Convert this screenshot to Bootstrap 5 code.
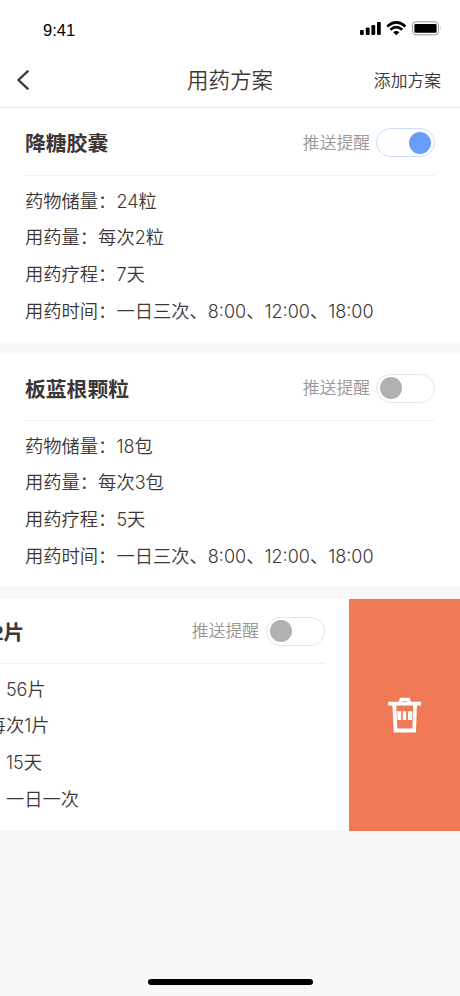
<!DOCTYPE html>
<html lang="zh-CN">
<head>
<meta charset="utf-8">
<meta name="viewport" content="width=device-width, initial-scale=1">
<title>用药方案</title>
<link href="https://cdn.jsdelivr.net/npm/bootstrap@5.3.0/dist/css/bootstrap.min.css" rel="stylesheet">
<style>
body{font-family:"Liberation Sans","Noto Sans CJK SC",sans-serif;background:#f8f8f6;color:#3c3735;height:996px;overflow:hidden}
.status-bar{height:54px;padding:6px 18px 0 43px;color:#000}
.clock{font-size:16.5px;line-height:50px}
.status-icons{margin-top:-4px}
.title-bar{height:54px;border-bottom:1px solid #e6e6e6;display:grid;grid-template-columns:1fr auto 1fr;padding:0 19px 0 16px}
.page-title{font-size:21.5px;line-height:53px;font-weight:350;padding:1px 0 0 3px}
.add-link{font-size:16.8px;line-height:53px;color:#3c3735;font-weight:350}
.plan{height:234px;margin-bottom:12px;padding:0 25px}
.plan-second{height:232px;margin-bottom:13px}
.plan-head{height:68px;padding-top:2px;border-bottom:1px solid #f0f0f0}
.plan-second .plan-head{height:67px}
.plan-name{font-size:20.8px;line-height:30px;font-weight:700;padding-top:3px}
.remind{font-size:16.8px;line-height:30px;color:#999794;font-weight:350}
.remind-label{padding:2px 6px 0 0}
.toggle{width:59px;height:29px;border:1px solid #e6e6e6;border-radius:15px;padding:0 3px;background:#fff}
.toggle-knob{width:22px;height:22px;border-radius:50%;background:#b3b0b0}
.toggle-on{border-color:#cbdcfc}
.toggle-on .toggle-knob{background:#689dfb}
.plan-rows{padding-top:7.5px;font-size:18.3px;line-height:36.75px;white-space:nowrap;font-weight:350}
.num{font-family:Inter,"Liberation Sans",sans-serif;font-size:18px;line-height:1}
.swipe{height:231.5px;overflow:hidden}
.swipe .plan{width:460px;height:100%;margin:0 0 0 -111px;padding:0 24px 0 25.5px}
.swipe .plan-head{height:65px;padding-top:0}
.swipe .remind-label{padding-right:7px}
.swipe-delete{width:111px;background:#f07a56;border:0;border-radius:0;padding:0}
.home-line{width:165px;height:6px;border-radius:3px;background:#000;margin-bottom:11.5px}
</style>
</head>
<body class="d-flex flex-column">
<header class="bg-white">
  <div class="status-bar d-flex justify-content-between align-items-center">
    <span class="clock">9:41</span>
    <svg class="status-icons" width="83" height="16" viewBox="0 0 83 16">
      <rect x="1" y="10" width="3.8" height="5" rx="1"/><rect x="6.8" y="7.6" width="3.8" height="7.4" rx="1"/><rect x="12.4" y="5" width="3.8" height="10" rx="1"/><rect x="18" y="2" width="3.8" height="13" rx="1"/>
      <g fill="none" stroke="#000" stroke-width="2.6"><path d="M28.2 6.4Q37.3-1.6 46.4 6.4"/><path d="M31.4 9.8Q37.3 4.6 43.2 9.8"/></g>
      <path d="M34.2 12.2Q37.3 9.8 40.4 12.2L37.3 15.2Z"/>
      <rect x="53.5" y="1.8" width="26" height="13" rx="3.6" fill="none" stroke="#999"/>
      <rect x="55.4" y="4" width="22.2" height="8.8" rx="1.4"/><path d="M81 6.3Q82.6 8.3 81 10.3Z" fill="#999"/>
    </svg>
  </div>
  <nav class="title-bar align-items-center">
    <svg width="14" height="22" viewBox="0 0 14 22" fill="none" stroke="#3c3735" stroke-width="2.3" stroke-linecap="round" stroke-linejoin="round"><path d="M11.6 1.3L2.4 10L11.6 18.7"/></svg>
    <span class="page-title">用药方案</span>
    <a class="add-link text-decoration-none text-end" href="#">添加方案</a>
  </nav>
</header>
<main>
  <section class="plan bg-white">
    <div class="plan-head d-flex align-items-center justify-content-between">
      <span class="plan-name">降糖胶囊</span>
      <div class="d-flex align-items-center remind"><span class="remind-label">推送提醒</span><span class="toggle toggle-on d-flex align-items-center justify-content-end"><span class="toggle-knob"></span></span></div>
    </div>
    <div class="plan-rows"><div>药物储量：<span class="num">24</span>粒</div><div>用药量：每次<span class="num">2</span>粒</div><div>用药疗程：<span class="num">7</span>天</div><div>用药时间：一日三次、<span class="num">8:00</span>、<span class="num">12:00</span>、<span class="num">18:00</span></div></div>
  </section>
  <section class="plan plan-second bg-white">
    <div class="plan-head d-flex align-items-center justify-content-between">
      <span class="plan-name">板蓝根颗粒</span>
      <div class="d-flex align-items-center remind"><span class="remind-label">推送提醒</span><span class="toggle d-flex align-items-center"><span class="toggle-knob"></span></span></div>
    </div>
    <div class="plan-rows"><div>药物储量：<span class="num">18</span>包</div><div>用药量：每次<span class="num">3</span>包</div><div>用药疗程：<span class="num">5</span>天</div><div>用药时间：一日三次、<span class="num">8:00</span>、<span class="num">12:00</span>、<span class="num">18:00</span></div></div>
  </section>
  <div class="swipe d-flex">
    <section class="plan bg-white flex-shrink-0">
      <div class="plan-head d-flex align-items-center justify-content-between">
        <span class="plan-name">维生素B2片</span>
        <div class="d-flex align-items-center remind"><span class="remind-label">推送提醒</span><span class="toggle d-flex align-items-center"><span class="toggle-knob"></span></span></div>
      </div>
      <div class="plan-rows"><div>药物储量：<span class="num">56</span>片</div><div>用药量：每次<span class="num">1</span>片</div><div>用药疗程：<span class="num">15</span>天</div><div>用药时间：一日一次</div></div>
    </section>
    <button class="swipe-delete btn flex-shrink-0 d-flex align-items-center justify-content-center" aria-label="删除">
      <svg width="34" height="36" viewBox="0 0 34 36"><path fill="#fff" fill-rule="evenodd" d="M10.6 4.8L12 .8H21.6L23 4.8H33V8.6H28.9L28 35.4H5.8L4.4 8.6H.2V4.8ZM8.2 8.6L9.4 31.6H24.4L25.2 8.6ZM14.5 4.8H19.5L18.8 4H15.2Z"/><path fill="#fff" d="M9 14.3H13.2V23H9.6ZM14.8 14.3H18.2V23H14.8ZM20 14.3H24.4L24 23H20Z"/></svg>
    </button>
  </div>
</main>
<div class="home-line mt-auto mx-auto flex-shrink-0"></div>
<script src="https://cdn.jsdelivr.net/npm/bootstrap@5.3.0/dist/js/bootstrap.bundle.min.js"></script>
</body>
</html>
